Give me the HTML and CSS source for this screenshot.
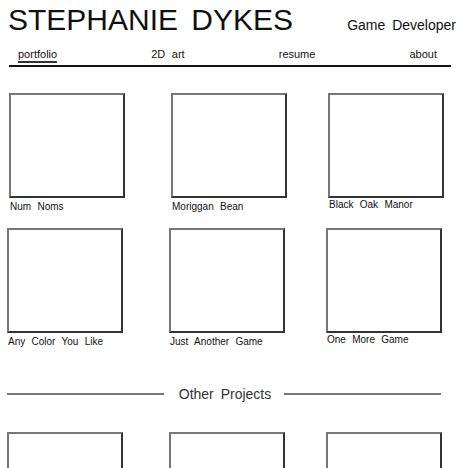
FILE: index.html
```html
<!DOCTYPE html>
<html lang="en">
<head>
  <meta charset="UTF-8">
  <meta name="viewport" content="width=device-width, initial-scale=1.0">
  <title>Stephanie Dykes - Game Developer</title>
  <link rel="stylesheet" href="styles.css">
</head>
<body>
  <div class="page">
    <header class="header">
      <h1 class="name">STEPHANIE DYKES</h1>
      <span class="role">Game Developer</span>
    </header>

    <nav class="nav">
      <a href="#" class="active">portfolio</a>
      <a href="#">2D art</a>
      <a href="#">resume</a>
      <a href="#">about</a>
    </nav>

    <div class="row first">
      <div class="card">
        <div class="thumb"></div>
        <div class="label">Num Noms</div>
      </div>
      <div class="card">
        <div class="thumb"></div>
        <div class="label">Moriggan Bean</div>
      </div>
      <div class="card">
        <div class="thumb"></div>
        <div class="label up">Black Oak Manor</div>
      </div>
    </div>

    <div class="row">
      <div class="card">
        <div class="thumb"></div>
        <div class="label">Any Color You Like</div>
      </div>
      <div class="card">
        <div class="thumb"></div>
        <div class="label">Just Another Game</div>
      </div>
      <div class="card">
        <div class="thumb"></div>
        <div class="label up">One More Game</div>
      </div>
    </div>

    <div class="divider">
      <span class="rule"></span>
      <h2>Other Projects</h2>
      <span class="rule"></span>
    </div>

    <div class="row">
      <div class="card">
        <div class="thumb"></div>
      </div>
      <div class="card">
        <div class="thumb"></div>
      </div>
      <div class="card">
        <div class="thumb"></div>
      </div>
    </div>
  </div>
</body>
</html>
```

FILE: styles.css
```css
body {
  font-family: "Liberation Sans", Arial, sans-serif;
  background-color: #fff;
  color: #111;
  margin: 0;
  padding: 0;
  word-spacing: 0.22em;
}

.page {
  padding: 5px 0 0 7px;
  width: 450px;
}

.header {
  display: flex;
  align-items: baseline;
  justify-content: space-between;
  padding-left: 1px;
}

.name {
  margin: 0;
  font-size: 30px;
  font-weight: normal;
  line-height: 30px;
  word-spacing: 5px;
}

.role {
  font-size: 14px;
  word-spacing: 3px;
  margin-right: 1px;
}

.nav {
  display: flex;
  justify-content: space-between;
  margin: 12px 0 0 2px;
  padding: 0 14px 2px 9px;
  border-bottom: 2px solid #111;
  width: 419px;
}

.nav a {
  font-size: 11px;
  line-height: 14px;
  color: #111;
  text-decoration: none;
  border-bottom: 2px solid transparent;
}

.nav a.active {
  border-bottom-color: #333;
}

.row {
  display: grid;
  grid-template-columns: 162px 157px 116px;
  margin-top: 15px;
}

.row.first {
  margin-top: 26px;
  padding-left: 2px;
}

.thumb {
  width: 116px;
  height: 105px;
  box-sizing: border-box;
  border: 2px solid;
  border-color: #777 #333 #333 #777;
  background-color: #fff;
}

.label {
  font-size: 10px;
  line-height: 12px;
  margin-top: 3px;
  padding-left: 1px;
}

.label.up {
  margin-top: 1px;
}

.divider {
  display: flex;
  align-items: center;
  width: 434px;
  margin-top: 38px;
}

.divider .rule {
  flex: 1;
  height: 0;
  border-top: 2px solid #777;
}

.divider h2 {
  margin: 0;
  padding: 0 13px 0 15px;
  font-size: 14px;
  font-weight: normal;
  line-height: 16px;
  color: #333;
  word-spacing: 3px;
}

.divider + .row {
  margin-top: 30px;
}
```
